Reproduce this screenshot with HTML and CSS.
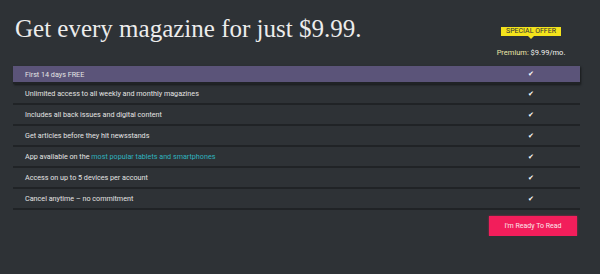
FILE: index.html
```html
<!DOCTYPE html>
<html lang="en">
<head>
    <meta charset="UTF-8">
    <meta name="viewport" content="width=device-width, initial-scale=1.0">
    <title>Magazine Offer</title>
    <link rel="stylesheet" href="styles.css">
</head>
<body>
    <div class="page">
        <div class="head">
            <h1 class="title">Get every magazine for just $9.99.</h1>
            <div class="offer">
                <span class="badge">SPECIAL OFFER</span>
                <div class="price"><span class="plan">Premium:</span> $9.99/mo.</div>
            </div>
        </div>

        <div class="features">
            <div class="row first"><span class="label">First 14 days FREE</span><span class="check">&#10004;</span></div>
            <div class="row"><span class="label">Unlimited access to all weekly and monthly magazines</span><span class="check">&#10004;</span></div>
            <div class="row"><span class="label">Includes all back issues and digital content</span><span class="check">&#10004;</span></div>
            <div class="row"><span class="label">Get articles before they hit newsstands</span><span class="check">&#10004;</span></div>
            <div class="row"><span class="label">App available on the <a href="#">most popular tablets and smartphones</a></span><span class="check">&#10004;</span></div>
            <div class="row"><span class="label">Access on up to 5 devices per account</span><span class="check">&#10004;</span></div>
            <div class="row"><span class="label">Cancel anytime &ndash; no commitment</span><span class="check">&#10004;</span></div>
        </div>

        <div class="actions">
            <button class="cta">I'm Ready To Read</button>
        </div>
    </div>
</body>
</html>
```

FILE: styles.css
```css
body {
    margin: 0;
    background: #2e3236;
    color: #e4e4e4;
    font-family: Roboto, "Liberation Sans", sans-serif;
}
.page {
    padding: 0 20px 0 13px;
}
.head {
    display: flex;
    justify-content: space-between;
    align-items: flex-start;
    height: 66px;
}
.title {
    margin: 15px 0 0 2px;
    font-family: "Liberation Serif", serif;
    font-weight: normal;
    font-size: 25px;
    line-height: 28px;
    color: #ececec;
}
.offer {
    width: 98px;
    margin-top: 27px;
    display: flex;
    flex-direction: column;
    align-items: center;
}
.badge {
    position: relative;
    background: #f4e31c;
    color: #2e3236;
    font-size: 7px;
    line-height: 9px;
    padding: 0 5px;
}
.badge::after {
    content: "";
    position: absolute;
    left: 50%;
    bottom: -3px;
    margin-left: -3px;
    border-left: 3px solid transparent;
    border-right: 3px solid transparent;
    border-top: 3px solid #f4e31c;
}
.price {
    margin-top: 12px;
    font-size: 7.5px;
    line-height: 10px;
    color: #f2f2f2;
}
.plan {
    color: #e9e6a6;
}
.row {
    display: flex;
    align-items: center;
    height: 19px;
    border-bottom: 2px solid #202326;
    font-size: 7.2px;
}
.row.first {
    height: 16px;
    background: #5b5479;
    box-shadow: 1px 1px 2px rgba(0, 0, 0, 0.5);
}
.label {
    flex: 1;
    padding-left: 12px;
}
.label a {
    color: #2fb2bf;
    text-decoration: none;
}
.check {
    width: 98px;
    text-align: center;
    font-family: "DejaVu Sans", sans-serif;
    font-size: 7px;
    color: #ffffff;
}
.actions {
    display: flex;
    justify-content: flex-end;
    padding: 6px 3px 0 0;
}
.cta {
    width: 88px;
    height: 20px;
    border: none;
    background: #f21e5b;
    color: #fbe6ec;
    font-family: Roboto, sans-serif;
    font-size: 7px;
    box-shadow: 0 0 2px rgba(242, 30, 91, 0.6);
}
```
